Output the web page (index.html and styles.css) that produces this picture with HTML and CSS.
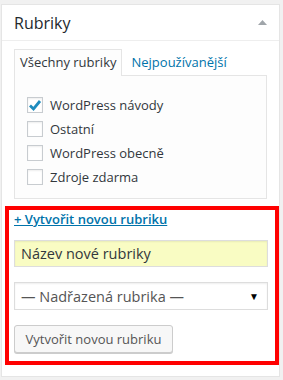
FILE: index.html
```html
<!DOCTYPE html>
<html lang="cs">
<head>
  <meta charset="UTF-8" />
  <meta name="viewport" content="width=device-width, initial-scale=1.0"/>
  <title>Rubriky</title>
  <link rel="stylesheet" href="styles.css">
</head>
<body>

  <div class="postbox">
    <div class="postbox-head">
      <h2>Rubriky</h2>
      <svg class="toggle" width="9" height="5" viewBox="0 0 9 5"><polygon points="0,5 4.5,0 9,5" fill="#a0a5aa"/></svg>
    </div>

    <div class="postbox-body">
      <ul class="tabs">
        <li class="tab active">Všechny rubriky</li>
        <li class="tab"><a href="#">Nejpoužívanější</a></li>
      </ul>

      <div class="tabs-panel">
        <ul class="checklist">
          <li>
            <span class="check checked">
              <svg width="14" height="14" viewBox="0 0 14 14"><path d="M2 7.5 L5.5 11 L12 3" fill="none" stroke="#1e8cbe" stroke-width="2.8"/></svg>
            </span>
            WordPress návody
          </li>
          <li><span class="check"></span>Ostatní</li>
          <li><span class="check"></span>WordPress obecně</li>
          <li><span class="check"></span>Zdroje zdarma</li>
        </ul>
      </div>

      <!-- highlighted add-new block -->
      <div class="add-new">
        <a href="#" class="add-toggle">+ Vytvořit novou rubriku</a>
        <input type="text" class="new-name" value="Název nové rubriky" />
        <div class="parent-select">
          <span>— Nadřazená rubrika —</span>
          <span class="arrow">▼</span>
        </div>
        <button type="button">Vytvořit novou rubriku</button>
      </div>
    </div>
  </div>

</body>
</html>
```

FILE: styles.css
```css
body {
  font-family: 'Open Sans', sans-serif;
  background-color: #f1f1f1;
  margin: 0;
  padding: 4px 3px 0 1px;
  color: #32373c;
}

.postbox {
  background: #fff;
  border: 1px solid #e5e5e5;
}

.postbox-head {
  height: 35px;
  border-bottom: 1px solid #eee;
  display: flex;
  justify-content: space-between;
  align-items: center;
  padding: 0 12px 0 12px;
}

.postbox-head h2 {
  margin: 0;
  font-size: 16px;
  font-weight: 400;
  color: #23282d;
}

.toggle {
  margin-top: -1px;
}

.postbox-body {
  padding: 8px 12px 11px 12px;
}

.tabs {
  list-style: none;
  margin: 0;
  padding: 0;
  display: flex;
  font-size: 13px;
}

.tab {
  height: 26px;
  line-height: 24px;
  padding: 0 5px;
  margin-bottom: -1px;
  border: 1px solid transparent;
  border-bottom: none;
}

.tab.active {
  border-color: #e5e5e5;
  background: #fdfdfd;
  position: relative;
  z-index: 1;
  color: #32373c;
}

.tab a {
  color: #0073aa;
  text-decoration: none;
  padding-left: 3px;
}

.tabs-panel {
  background: #fdfdfd;
  border: 1px solid #e5e5e5;
  height: 122px;
}

.checklist {
  list-style: none;
  margin: 0;
  padding: 17px 12px 0 12px;
  font-size: 13px;
}

.checklist li {
  display: flex;
  align-items: center;
  gap: 7px;
  height: 24px;
  color: #32373c;
}

.check {
  width: 16px;
  height: 16px;
  box-sizing: border-box;
  border: 1px solid #c8ccd0;
  background: #fff;
  box-shadow: inset 0 1px 2px rgba(0, 0, 0, 0.07);
  display: flex;
  align-items: center;
  justify-content: center;
}

.add-new {
  margin: 7px -12px 0 -9px;
  border: 4px solid #ff0000;
  padding: 0 7px 8px 5px;
  display: flex;
  flex-direction: column;
  align-items: flex-start;
}

.add-toggle {
  font-size: 13px;
  font-weight: 600;
  color: #0073aa;
  line-height: 19px;
}

.new-name {
  margin-top: 11px;
  width: 100%;
  box-sizing: border-box;
  height: 27px;
  padding: 0 6px;
  font-family: 'Open Sans', sans-serif;
  font-size: 14.5px;
  color: #32373c;
  background: #f9fcc3;
  border: 1px solid #ddd;
  box-shadow: inset 0 1px 2px rgba(0, 0, 0, 0.07);
  outline: none;
}

.parent-select {
  margin-top: 15px;
  width: 100%;
  box-sizing: border-box;
  height: 28px;
  padding: 0 8px 0 6px;
  display: flex;
  justify-content: space-between;
  align-items: center;
  font-size: 14.5px;
  color: #555;
  background: #fff;
  border: 1px solid #ddd;
  box-shadow: inset 0 1px 2px rgba(0, 0, 0, 0.07);
}

.parent-select .arrow {
  font-size: 10px;
  color: #000;
}

button {
  margin-top: 15px;
  height: 28px;
  width: 159px;
  font-family: 'Open Sans', sans-serif;
  font-size: 13px;
  color: #555;
  background: #f7f7f7;
  border: 1px solid #ccc;
  border-radius: 3px;
  box-shadow: 0 1px 0 #ccc;
  cursor: pointer;
  padding: 0;
}
```
